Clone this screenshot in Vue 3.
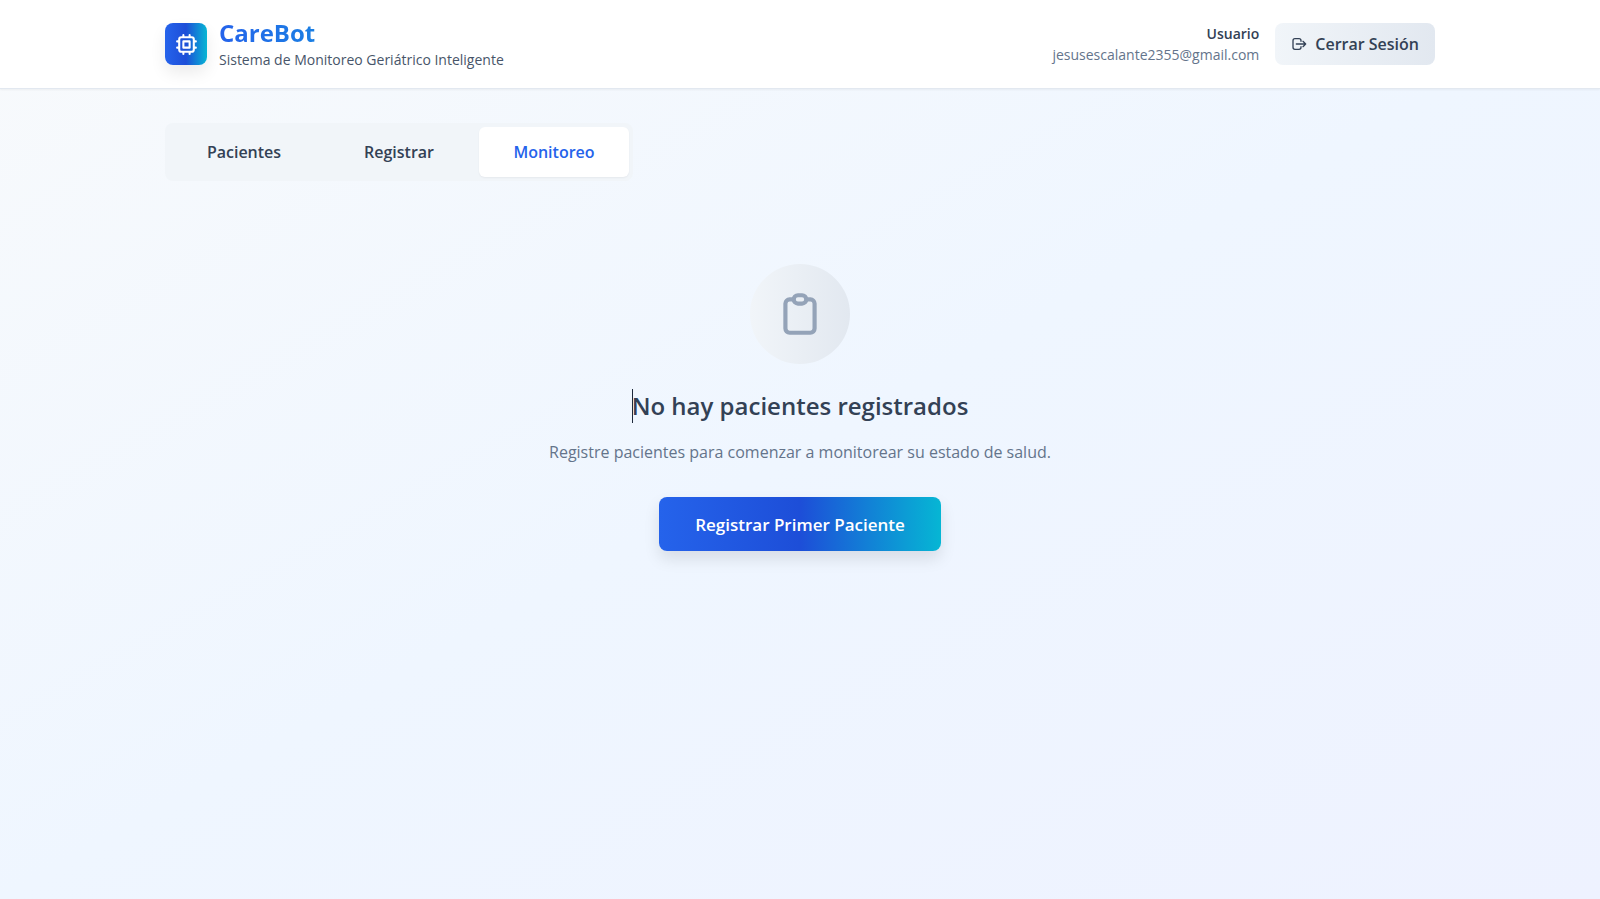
<template>
  <div class="page">
    <header class="header">
      <div class="container header-inner">
        <div class="brand">
          <div class="brand-logo">
            <svg viewBox="0 0 24 24" fill="none" stroke="currentColor" stroke-width="2" stroke-linecap="round" stroke-linejoin="round" aria-hidden="true">
              <path d="M9 3v2m6-2v2M9 19v2m6-2v2M5 9H3m2 6H3m18-6h-2m2 6h-2M7 19h10a2 2 0 002-2V7a2 2 0 00-2-2H7a2 2 0 00-2 2v10a2 2 0 002 2zM9 9h6v6H9V9z" />
            </svg>
          </div>
          <div>
            <h1 class="brand-name">CareBot</h1>
            <p class="brand-subtitle">Sistema de Monitoreo Geriátrico Inteligente</p>
          </div>
        </div>
        <div class="account">
          <div class="user">
            <p class="user-name">{{ user.name }}</p>
            <p class="user-email">{{ user.email }}</p>
          </div>
          <button type="button" class="logout">
            <svg viewBox="0 0 24 24" fill="none" stroke="currentColor" stroke-width="2" stroke-linecap="round" stroke-linejoin="round" aria-hidden="true">
              <path d="M18 16l4-4m0 0l-4-4m4 4H8m7 4v1a3 3 0 01-3 3H6a3 3 0 01-3-3V7a3 3 0 013-3h6a3 3 0 013 3v1" />
            </svg>
            Cerrar Sesión
          </button>
        </div>
      </div>
    </header>

    <main class="container main">
      <nav class="tabs">
        <button
          v-for="tab in tabs"
          :key="tab.id"
          type="button"
          class="tab"
          :class="{ 'tab-active': activeTab === tab.id }"
          @click="activeTab = tab.id"
        >
          {{ tab.label }}
        </button>
      </nav>

      <section class="empty">
        <div class="empty-icon">
          <svg viewBox="0 0 24 24" fill="none" stroke="currentColor" stroke-width="2" stroke-linecap="round" stroke-linejoin="round" aria-hidden="true">
            <path d="M9 5H7a2 2 0 00-2 2v12a2 2 0 002 2h10a2 2 0 002-2V7a2 2 0 00-2-2h-2M9 5a2 2 0 002 2h2a2 2 0 002-2M9 5a2 2 0 012-2h2a2 2 0 012 2" />
          </svg>
        </div>
        <h2 class="empty-title">No hay pacientes registrados</h2>
        <p class="empty-text">Registre pacientes para comenzar a monitorear su estado de salud.</p>
        <button type="button" class="primary" @click="activeTab = 'registrar'">Registrar Primer Paciente</button>
      </section>
    </main>
  </div>
</template>

<script setup>
import { ref } from 'vue';

const user = {
  name: 'Usuario',
  email: 'jesusescalante2355@gmail.com'
};

const tabs = [
  { id: 'pacientes', label: 'Pacientes' },
  { id: 'registrar', label: 'Registrar' },
  { id: 'monitoreo', label: 'Monitoreo' }
];

const activeTab = ref('monitoreo');
</script>

<style>
body {
  margin: 0;
}
</style>

<style scoped>
.page {
  min-height: 100vh;
  background: linear-gradient(to bottom right, #f8fafc 0%, #eff6ff 50%, #eef2ff 100%);
  color: #334155;
  font-family: "Segoe UI", "Open Sans", "Noto Sans", sans-serif;
  font-size: 16px;
}

h1,
h2,
p {
  margin: 0;
}

button {
  border: none;
  font-family: inherit;
  cursor: pointer;
}

.container {
  max-width: 1270px;
  margin: 0 auto;
  padding: 0 32px;
}

.header {
  background: #fff;
  border-bottom: 1px solid #e2e8f0;
  box-shadow: 0 1px 2px rgba(0, 0, 0, 0.05);
}

.header-inner {
  display: flex;
  align-items: center;
  justify-content: space-between;
  min-height: 88px;
}

.brand {
  display: flex;
  align-items: center;
  gap: 12px;
}

.brand-logo {
  display: flex;
  align-items: center;
  justify-content: center;
  width: 42px;
  height: 42px;
  border-radius: 8px;
  background: linear-gradient(90deg, #2563eb 0%, #1d4ed8 50%, #06b6d4 100%);
  box-shadow: 0 8px 16px rgba(0, 0, 0, 0.08);
  color: #fff;
}

.brand-logo svg {
  width: 25px;
  height: 25px;
}

.brand-name {
  background: linear-gradient(90deg, #2563eb, #06b6d4);
  background-clip: text;
  -webkit-background-clip: text;
  color: transparent;
  font-size: 24px;
  font-weight: 700;
  line-height: 32px;
}

.brand-subtitle {
  color: #475569;
  font-size: 14px;
  line-height: 22px;
}

.account {
  display: flex;
  align-items: center;
  gap: 16px;
}

.user {
  text-align: right;
  font-size: 14px;
  line-height: 21px;
}

.user-name {
  font-weight: 600;
}

.user-email {
  color: #64748b;
}

.logout {
  display: flex;
  align-items: center;
  gap: 8px;
  padding: 0 16px;
  height: 42px;
  border-radius: 8px;
  background: linear-gradient(90deg, #f1f5f9, #e2e8f0);
  color: #334155;
  font-size: 16px;
  font-weight: 600;
}

.logout svg {
  width: 16px;
  height: 16px;
}

.main {
  padding-top: 34px;
}

.tabs {
  display: inline-grid;
  grid-template-columns: repeat(3, 150px);
  gap: 5px;
  padding: 4px;
  border-radius: 8px;
  background: #f1f5f9;
}

.tab {
  height: 50px;
  border-radius: 6px;
  background: transparent;
  color: #334155;
  font-size: 16px;
  font-weight: 600;
}

.tab-active {
  background: #fff;
  box-shadow: 0 1px 2px rgba(0, 0, 0, 0.05);
  color: #2563eb;
}

.empty {
  display: flex;
  flex-direction: column;
  align-items: center;
  padding: 83px 0;
  text-align: center;
}

.empty-icon {
  display: flex;
  align-items: center;
  justify-content: center;
  width: 100px;
  height: 100px;
  margin-bottom: 25px;
  border-radius: 50%;
  background: linear-gradient(90deg, #f1f5f9, #e2e8f0);
  color: #94a3b8;
}

.empty-icon svg {
  width: 50px;
  height: 50px;
}

.empty-title {
  position: relative;
  margin-bottom: 16px;
  font-size: 24px;
  font-weight: 600;
  line-height: 34px;
}

/* text caret at the start of the heading */
.empty-title::before {
  content: "";
  position: absolute;
  top: 0;
  left: 0;
  width: 1px;
  height: 100%;
  background: #1e293b;
}

.empty-text {
  margin-bottom: 32px;
  color: #64748b;
  font-size: 16px;
  line-height: 26px;
}

.primary {
  height: 54px;
  padding: 0 36px;
  border-radius: 8px;
  background: linear-gradient(90deg, #2563eb 0%, #1d4ed8 50%, #06b6d4 100%);
  box-shadow: 0 8px 16px rgba(0, 0, 0, 0.1);
  color: #fff;
  font-size: 17px;
  font-weight: 600;
}
</style>
